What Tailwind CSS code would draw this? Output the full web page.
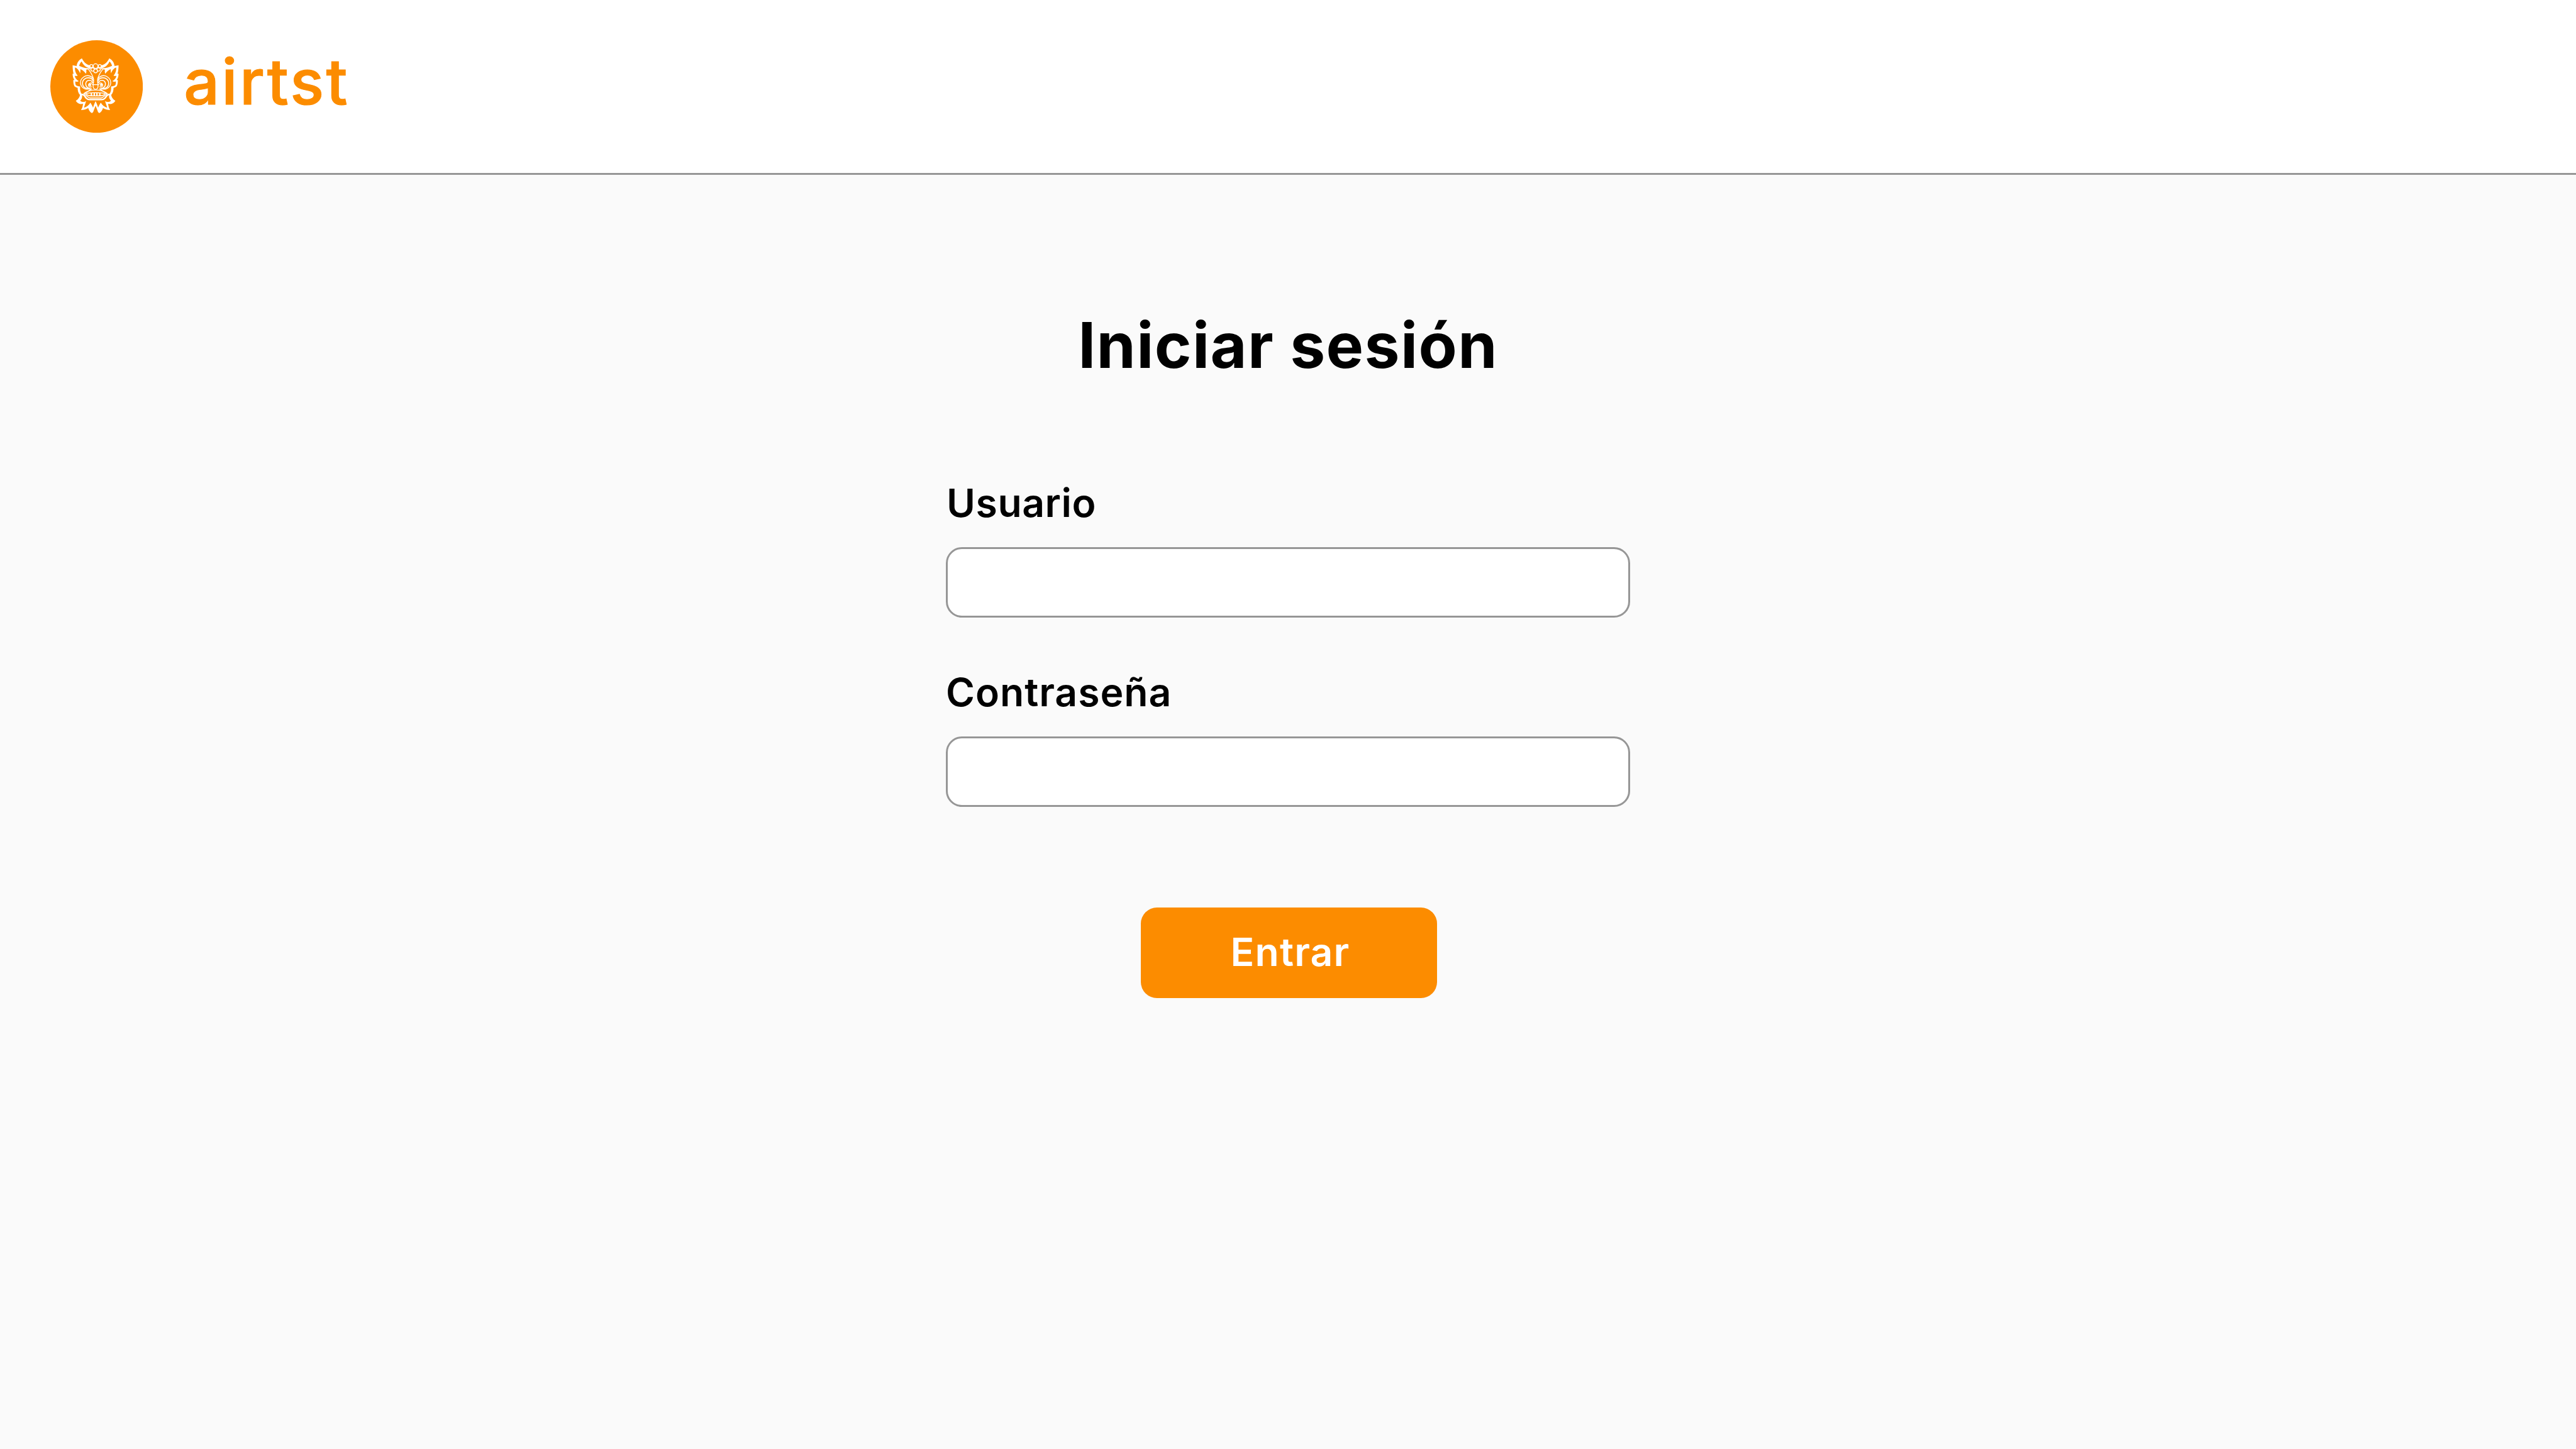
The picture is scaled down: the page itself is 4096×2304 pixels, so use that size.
<!DOCTYPE html>
<html lang="es">
<head>
<meta charset="utf-8">
<title>airtst</title>
<script src="https://cdn.jsdelivr.net/npm/@tailwindcss/browser@4"></script>
</head>
<body class="min-h-screen bg-[#fafafa] font-['Inter',sans-serif] text-black">
<header class="flex h-[278.4px] items-start gap-[65px] border-b-[3.2px] border-[#969696] bg-white pl-20 pt-16 text-[#fc8c00]">
  <svg class="size-[147.2px] shrink-0" viewBox="60 60 552 552" fill="none" stroke="#fff">
    <circle cx="336" cy="336" r="276" fill="#fc8c00" stroke="none"/>
    <!-- left half of the mask, mirrored below -->
    <g id="half">
      <path fill="#fff" stroke="none" d="M248 168C233 176 219 192 217 214L193 209C193 230 195 246 199 261L193 259C193 275 196 286 204 297L197 297C197 314 199 324 204 335C210 340 216 342 223 344C223 360 226 374 237 386C234 402 226 412 212 421C218 430 226 437 236 440C242 441 248 440 255 439C254 454 250 466 243 476C258 476 272 472 286 464C290 480 298 488 307 494C314 492 317 487 319 478L330 450L330 423C325 434 320 444 315 462C311 452 307 445 299 432C290 448 278 457 261 462C265 447 270 435 274 422C264 429 250 431 238 421C246 413 250 404 250 393L247 380C239 370 236 354 238 336C226 335 218 332 212 327C209 319 209 315 209 306C216 308 223 308 230 304C218 296 208 288 206 272C212 274 218 273 223 271C210 256 206 240 207 222C219 225 230 238 238 257C240 245 240 238 239 232C254 240 264 248 272 260C276 250 276 244 274 235L290 233L286 227C270 227 250 222 232 213C235 202 240 193 247 187C255 205 268 221 294 228L304 222L303 210C280 210 262 195 248 168Z"/>
      <path stroke-width="5" d="M262 230H300M288 234C302 252 312 268 318 292Q320 308 315 326"/>
      <path stroke-width="5" d="M317 292C306 270 276 264 256 281C236 297 234 324 252 341C266 354 288 353 304 348"/>
      <path stroke-width="6" d="M316 304C310 283 280 277 262 293C246 309 250 334 268 344C278 349 290 349 298 346"/>
      <path stroke-width="6" d="M314 315C306 294 282 296 274 309C266 323 274 342 290 345"/>
      <path stroke-width="5" d="M310 319C302 310 288 316 287 327C287 338 298 342 306 336"/>
      <circle cx="297" cy="326" r="6" stroke-width="3" fill="#fff"/>
      <path stroke-width="5" d="M316 325C313 342 319 352 330 353M308 325H330"/>
      <path stroke-width="5" d="M308 349C294 357 280 367 262 380"/>
      <path stroke-width="5" d="M258 379C280 363 302 357 330 357"/>
      <path stroke-width="5" d="M268 379C290 372 310 373 330 373"/>
      <path stroke-width="9" d="M244 385C256 379 262 388 274 405Q282 414 294 414H330"/>
      <path stroke-width="5" d="M262 380C276 388 282 401 296 404H330"/>
      <path stroke-width="6" d="M274 381C284 390 290 393 330 392"/>
      <path stroke-width="8" d="M305 374V392M322 374V392"/>
      <circle cx="305" cy="214" r="9" stroke-width="5" fill="#fc8c00"/>
      <circle cx="312" cy="234" r="10" stroke-width="5" fill="#fc8c00"/>
    </g>
    <use href="#half" transform="matrix(-1 0 0 1 660 0)"/>
    <circle cx="330" cy="243" r="11" stroke-width="5" fill="#fc8c00"/>
    <circle cx="330" cy="214" r="14" stroke-width="5" fill="#fc8c00"/>
  </svg>
  <span class="mt-[2px] text-[100px] leading-[128px] font-medium tracking-[3.4px] [-webkit-text-stroke:1.2px_#fc8c00]">airtst</span>
</header>
<main class="flex flex-col items-center pt-[207px]">
  <h1 class="text-[100px] leading-[128px] font-bold tracking-[1.4px]">Iniciar sesión</h1>
  <form class="mt-[148px] flex w-[1088px] flex-col">
    <label for="user" class="pl-px text-[62.4px] leading-[77px] font-semibold tracking-[0.6px]">Usuario</label>
    <input id="user" type="text" class="mt-8 h-28 rounded-[25.6px] border-[3.2px] border-[#969696] bg-white">
    <label for="pass" class="mt-[79.8px] text-[62.4px] leading-[77px] font-semibold tracking-[1px]">Contraseña</label>
    <input id="pass" type="password" class="mt-8 h-28 rounded-[25.6px] border-[3.2px] border-[#969696] bg-white">
    <button type="button" class="mt-40 ml-[310.4px] h-36 w-[470.4px] rounded-[25.6px] bg-[#fc8c00] pb-[3px] pl-1 text-[62.4px] font-semibold tracking-[1.2px] text-white">Entrar</button>
  </form>
</main>
</body>
</html>
